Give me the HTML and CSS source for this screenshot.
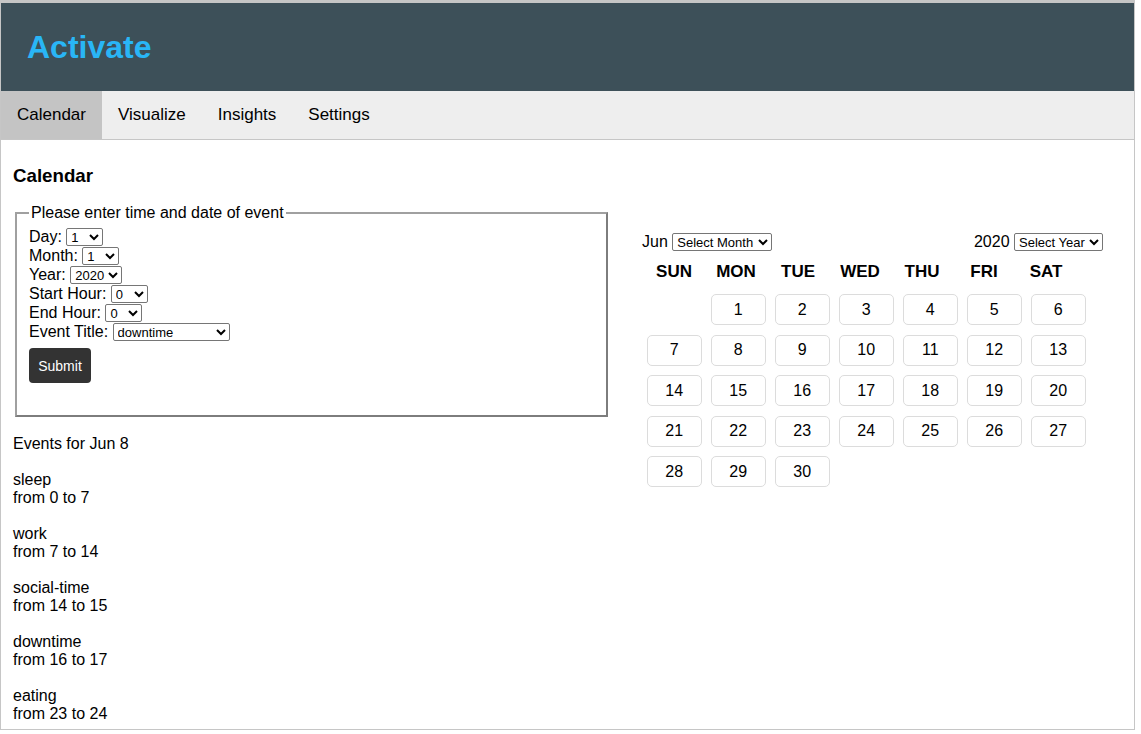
FILE: index.html
```html
<!DOCTYPE html>
<html lang="en">
<head>
<meta charset="utf-8">
<title>Activate</title>
<link rel="stylesheet" href="styles.css">
</head>
<body>
<div class="frame">
  <header class="topbar">
    <h1 class="brand">Activate</h1>
  </header>
  <nav class="tabs">
    <a class="tab active">Calendar</a>
    <a class="tab">Visualize</a>
    <a class="tab">Insights</a>
    <a class="tab">Settings</a>
  </nav>
  <main class="main">
    <h3 class="page-title">Calendar</h3>
    <div class="columns">
      <div class="left">
        <fieldset class="event-form">
          <legend>Please enter time and date of event</legend>
          <div class="field">Day: <select class="sel sel-s"><option>1</option></select></div>
          <div class="field">Month: <select class="sel sel-s"><option>1</option></select></div>
          <div class="field">Year: <select class="sel sel-y"><option>2020</option></select></div>
          <div class="field">Start Hour: <select class="sel sel-s"><option>0</option></select></div>
          <div class="field">End Hour: <select class="sel sel-s"><option>0</option></select></div>
          <div class="field">Event Title: <select class="sel sel-t"><option>downtime</option></select></div>
          <button class="submit" type="button">Submit</button>
        </fieldset>
        <div class="events">
          <p>Events for Jun 8</p>
          <p>sleep<br>from 0 to 7</p>
          <p>work<br>from 7 to 14</p>
          <p>social-time<br>from 14 to 15</p>
          <p>downtime<br>from 16 to 17</p>
          <p>eating<br>from 23 to 24</p>
        </div>
      </div>
      <div class="right">
        <div class="cal-head">
          <div>Jun <select class="sel sel-m"><option>Select Month</option></select></div>
          <div>2020 <select class="sel sel-yr"><option>Select Year</option></select></div>
        </div>
        <div class="weekdays">
          <span>SUN</span><span>MON</span><span>TUE</span><span>WED</span><span>THU</span><span>FRI</span><span>SAT</span>
        </div>
        <div class="days">
          <button class="day start">1</button>
          <button class="day">2</button>
          <button class="day">3</button>
          <button class="day">4</button>
          <button class="day">5</button>
          <button class="day">6</button>
          <button class="day">7</button>
          <button class="day">8</button>
          <button class="day">9</button>
          <button class="day">10</button>
          <button class="day">11</button>
          <button class="day">12</button>
          <button class="day">13</button>
          <button class="day">14</button>
          <button class="day">15</button>
          <button class="day">16</button>
          <button class="day">17</button>
          <button class="day">18</button>
          <button class="day">19</button>
          <button class="day">20</button>
          <button class="day">21</button>
          <button class="day">22</button>
          <button class="day">23</button>
          <button class="day">24</button>
          <button class="day">25</button>
          <button class="day">26</button>
          <button class="day">27</button>
          <button class="day">28</button>
          <button class="day">29</button>
          <button class="day">30</button>
        </div>
      </div>
    </div>
  </main>
</div>
</body>
</html>
```
FILE: styles.css
```css
html, body {
  margin: 0;
  padding: 0;
  background: #fff;
}
body {
  font-family: "Liberation Sans", Arial, sans-serif;
  font-size: 16px;
  color: #000;
}
.frame {
  box-sizing: border-box;
  width: 1135px;
  height: 730px;
  border-style: solid;
  border-color: #c6c6c6;
  border-width: 3px 1px 1px 1px;
  overflow: hidden;
}
.topbar {
  height: 88px;
  background: #3d5059;
  display: flex;
  align-items: center;
  padding-left: 26px;
}
.brand {
  margin: 0;
  font-size: 32px;
  font-weight: bold;
  color: #29b6f6;
  line-height: 1;
}
.tabs {
  height: 48px;
  background: #eeeeee;
  border-bottom: 1px solid #c6c6c6;
  display: flex;
}
.tab {
  display: flex;
  align-items: center;
  padding: 0 16px;
  font-size: 17px;
  color: #000;
}
.tab.active {
  background: #c4c4c4;
}
.main {
  padding: 7px 12px 0 12px;
}
.page-title {
  font-size: 18.72px;
  font-weight: bold;
  margin: 18px 0 17px 0;
  line-height: 22px;
}
.columns {
  display: flex;
}
.left {
  width: 597px;
}
.event-form {
  margin: 0 2px;
  padding: 5px 12px 32px 12px;
  border: 2px solid #7d7d7d;
  border-top-color: #a0a0a0;
  border-left-color: #a0a0a0;
}
legend {
  padding: 0 2px;
  font-size: 16px;
  line-height: 18px;
}
.field {
  line-height: 19px;
  height: 19px;
}
.sel {
  font-family: "Liberation Sans", Arial, sans-serif;
  font-size: 13px;
  height: 18px;
  padding: 0;
  border: 1px solid #767676;
  border-radius: 2px;
  background: #fff;
  color: #000;
  vertical-align: middle;
  margin-top: -2px;
}
.sel-s { width: 37px; }
.sel-y { width: 52px; }
.sel-t { width: 117px; }
.sel-m { width: 100px; }
.sel-yr { width: 89px; }
.submit {
  margin-top: 7px;
  width: 62px;
  height: 35px;
  background: #333;
  color: #fff;
  border: none;
  border-radius: 4px;
  font-family: "Liberation Sans", Arial, sans-serif;
  font-size: 14px;
  padding: 0;
}
.events {
  margin-top: 18px;
}
.events p {
  margin: 0 0 18px 0;
  line-height: 18px;
}
.right {
  margin-left: 32px;
  padding-top: 29px;
  width: 461px;
}
.cal-head {
  display: flex;
  justify-content: space-between;
  line-height: 18px;
}
.weekdays {
  margin-top: 11px;
  margin-left: 5px;
  display: grid;
  grid-template-columns: repeat(7, 54px);
  column-gap: 8px;
  font-size: 17px;
  font-weight: bold;
  text-align: center;
  line-height: 20px;
}
.days {
  margin-top: 12px;
  margin-left: 5px;
  display: grid;
  grid-template-columns: repeat(7, 54.5px);
  grid-auto-rows: 31px;
  column-gap: 9.5px;
  row-gap: 9.5px;
}
.day {
  background: #fff;
  border: 1px solid #dcdcdc;
  border-radius: 5px;
  font-family: "Liberation Sans", Arial, sans-serif;
  font-size: 16px;
  color: #000;
  padding: 0;
}
.day.start {
  grid-column-start: 2;
}
```
